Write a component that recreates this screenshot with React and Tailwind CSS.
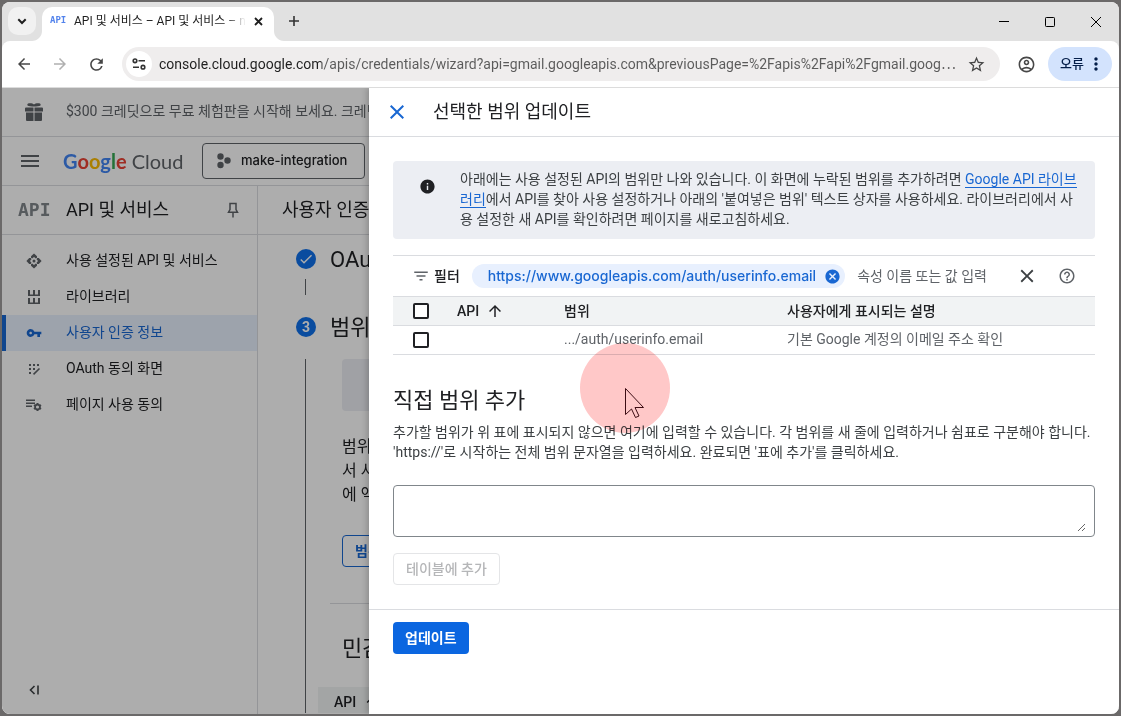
import {
  MdArrowBack,
  MdArrowForward,
  MdArrowUpward,
  MdCancel,
  MdCheck,
  MdClose,
  MdFilterList,
  MdHelpOutline,
  MdInfo,
  MdMenu,
  MdMoreVert,
  MdOutlineAccountCircle,
  MdRefresh,
  MdStarBorder,
  MdVpnKey,
} from 'react-icons/md';

const URL_TEXT =
  'console.cloud.google.com/apis/credentials/wizard?api=gmail.googleapis.com&previousPage=%2Fapis%2Fapi%2Fgmail.goog⋯';

function GiftIcon() {
  return (
    <svg width="18" height="18" viewBox="0 0 18 18" fill="currentColor" aria-hidden="true">
      <path d="M1 4.500h7.500v4H0v-3a1 1 0 0 1 1-1zM9.500 4.500H17a1 1 0 0 1 1 1v3H9.500zM1 9.500h7.500V18H2a1 1 0 0 1-1-1zM9.500 9.500H17V17a1 1 0 0 1-1 1H9.500z" />
      <path d="M9 3.500C6.500 3.500 3.500 3.500 2.500 2.600 2 1.600 2.600.5 4 .3 6 0 8 .6 9 1.400 10 .6 12 0 14 .3c1.400.2 2 1.300 1.500 2.300-1 .9-4 .9-6.500.9z" />
    </svg>
  );
}

function ApiIcon() {
  return (
    <svg width="16" height="16" viewBox="0 0 16 16" fill="currentColor" aria-hidden="true">
      <path d="M8 .4 11 3.200v1.600L9.800 5.500 8 4 6.200 5.500 5 4.800V3.200z" />
      <path d="M8 15.600 5 12.800v-1.600l1.200-.7L8 12l1.800-1.500 1.200.7v1.600z" />
      <path d="M.4 8 3.200 5h1.600l.7 1.200L4 8l1.500 1.800-.7 1.200H3.200z" />
      <path d="m15.600 8-2.800 3h-1.600l-.7-1.200L12 8l-1.500-1.800.7-1.200h1.600z" />
      <circle cx="8" cy="8" r="1.500" />
    </svg>
  );
}

function LibraryIcon() {
  return (
    <svg width="14" height="16" viewBox="0 0 14 16" fill="currentColor" aria-hidden="true">
      <path d="M1 1h2v5H1zM6 1h2v5H6zM11 1h2v5h-2zM1 9h2v5H1zM6 9h2v5H6zM11 9h2v5h-2zM1 5.500h12V7H1zM1 13.500h12V15H1z" />
    </svg>
  );
}

function ConsentIcon() {
  return (
    <svg width="14" height="14" viewBox="0 0 14 14" aria-hidden="true">
      <path
        fill="currentColor"
        d="M2 2h2v2H2zM6 2h2v2H6zM10 2h2v2h-2zM2 6h2v2H2zM6 6h2v2H6zM2 10h2v2H2z"
      />
      <path d="M6.500 12.300 12.500 6.500" stroke="currentColor" strokeWidth="1.600" fill="none" />
    </svg>
  );
}

function UsageIcon() {
  return (
    <svg width="16" height="14" viewBox="0 0 16 14" aria-hidden="true">
      <path fill="currentColor" d="M0 1.500h9V3H0zM0 4.500h9V6H0zM0 7.500h6V9H0z" />
      <circle cx="11.500" cy="9" r="2.400" fill="none" stroke="currentColor" strokeWidth="1.700" />
      <g stroke="currentColor" strokeWidth="2">
        <path d="M11.500 5v1.600M11.500 11.400V13M8 7l1.400.8M13.600 10.200l1.400.8M8 11l1.400-.8M13.600 7.800 15 7" />
      </g>
    </svg>
  );
}

function PinIcon() {
  return (
    <svg width="12" height="16" viewBox="0 0 12 16" fill="none" stroke="currentColor" strokeWidth="1.500" aria-hidden="true">
      <path d="M3 1.500h6v6l1.500 2.700h-9L3 7.500zM6 10.500V15.500" />
    </svg>
  );
}

function TuneIcon() {
  return (
    <svg width="14" height="12" viewBox="0 0 14 12" fill="none" stroke="#333" strokeWidth="1.600" aria-hidden="true">
      <circle cx="3" cy="2.800" r="1.800" />
      <path d="M6.500 2.800H13M1 9.200h6" />
      <circle cx="11" cy="9.200" r="1.800" />
    </svg>
  );
}

const NAV = [
  { label: '사용 설정된 API 및 서비스', icon: <ApiIcon /> },
  { label: '라이브러리', icon: <LibraryIcon /> },
  { label: '사용자 인증 정보', icon: <MdVpnKey size={16} />, active: true },
  { label: 'OAuth 동의 화면', icon: <ConsentIcon /> },
  { label: '페이지 사용 동의', icon: <UsageIcon /> },
];

function TabStrip() {
  return (
    <header className="flex h-[39px] items-end bg-[#e1e1e1]">
      <button
        aria-label="탭 검색"
        className="mb-1.5 ml-1.5 flex size-7 items-center justify-center rounded-[10px] bg-[#f1f1f1]"
      >
        <svg width="10" height="7" viewBox="0 0 10 7" fill="none" stroke="#1f1f1f" strokeWidth="2" aria-hidden="true">
          <path d="m1.300 1.300 3.700 3.700 3.700-3.700" />
        </svg>
      </button>
      <div className="relative ml-1.5 flex h-[34px] w-[232px] items-center rounded-t-[10px] bg-white pr-2 pb-1.5 pl-2">
        <svg className="absolute bottom-0 -left-2.5" width="10" height="10" viewBox="0 0 10 10" aria-hidden="true">
          <path d="M10 0v10H0C5.500 10 10 5.500 10 0z" fill="#fff" />
        </svg>
        <svg className="absolute -right-2.5 bottom-0" width="10" height="10" viewBox="0 0 10 10" aria-hidden="true">
          <path d="M0 0v10h10C4.500 10 0 5.500 0 0z" fill="#fff" />
        </svg>
        <span className="w-6 shrink-0 font-['DejaVu_Sans_Mono',monospace] text-[9px] font-bold text-[#5383ec]">API</span>
        <span className="min-w-0 flex-1 overflow-hidden text-xs whitespace-nowrap text-[#1f1f1f] [mask-image:linear-gradient(to_right,#000_152px,transparent_172px)]">
          API 및 서비스 – API 및 서비스 – n
        </span>
        <button aria-label="탭 닫기" className="ml-1 flex size-4 items-center justify-center text-[#1f1f1f]">
          <svg width="9" height="9" viewBox="0 0 9 9" stroke="currentColor" strokeWidth="1.800" aria-hidden="true">
            <path d="m1 1 7 7M8 1 1 8" />
          </svg>
        </button>
      </div>
      <button aria-label="새 탭" className="mb-1.5 ml-1.5 flex size-7 items-center justify-center">
        <svg width="10" height="10" viewBox="0 0 10 10" stroke="#333" strokeWidth="1.600" aria-hidden="true">
          <path d="M5 0v10M0 5h10" />
        </svg>
      </button>
      <div className="ml-auto flex h-full">
        <button aria-label="최소화" className="flex w-[46px] items-center justify-center">
          <svg width="10" height="10" viewBox="0 0 10 10" stroke="#000" aria-hidden="true"><path d="M0 4.500h10" /></svg>
        </button>
        <button aria-label="최대화" className="flex w-[46px] items-center justify-center">
          <svg width="10" height="10" viewBox="0 0 10 10" fill="none" stroke="#000" aria-hidden="true"><rect x=".5" y=".5" width="9" height="9" rx=".8" /></svg>
        </button>
        <button aria-label="닫기" className="flex w-[46px] items-center justify-center">
          <svg width="10" height="10" viewBox="0 0 10 10" stroke="#000" aria-hidden="true"><path d="m0 0 10 10M10 0 0 10" /></svg>
        </button>
      </div>
    </header>
  );
}

function Toolbar() {
  return (
    <div className="bg-[#e1e1e1]">
      <div className="flex h-[47px] items-center rounded-t-lg border-b border-[#dcdcdc] bg-white pr-[7px] pl-1 text-[#474747]">
        <button aria-label="뒤로" className="flex size-9 items-center justify-center"><MdArrowBack size={18} /></button>
        <button aria-label="앞으로" className="flex size-9 items-center justify-center text-[#b0b0b0]"><MdArrowForward size={18} /></button>
        <button aria-label="새로고침" className="flex size-9 items-center justify-center"><MdRefresh size={19} /></button>
        <div className="ml-2 flex h-[34px] flex-1 items-center rounded-full bg-[#efeded] pr-3 pl-1">
          <button aria-label="사이트 정보" className="flex size-[26px] items-center justify-center rounded-full bg-white">
            <TuneIcon />
          </button>
          <input
            aria-label="주소창"
            defaultValue={URL_TEXT}
            className="ml-[7px] min-w-0 flex-1 bg-transparent bg-[linear-gradient(to_right,#1f1f1f_162px,#5a5a5a_162px)] bg-clip-text font-[Roboto,'Noto_Sans_CJK_KR',sans-serif] text-sm text-transparent outline-none"
          />
          <button aria-label="북마크" className="flex size-6 items-center justify-center"><MdStarBorder size={19} /></button>
        </div>
        <button aria-label="프로필" className="ml-3.5 flex size-6 items-center justify-center"><MdOutlineAccountCircle size={19} /></button>
        <button className="ml-2.5 flex h-[34px] items-center rounded-full bg-[#d3e3fd] pr-1.5 pl-3 text-[13px] font-medium text-[#041e49]">
          오류
          <MdMoreVert size={20} className="ml-0.5" />
        </button>
      </div>
    </div>
  );
}

function Sidebar() {
  return (
    <aside className="flex w-64 shrink-0 flex-col border-r border-[#dadce0]">
      <div className="flex h-[49px] items-center border-b border-[#dadce0] pr-[18px] pl-4">
        <span className="w-12 font-['DejaVu_Sans_Mono',monospace] text-lg font-bold text-[#80868b]">API</span>
        <h2 className="flex-1 text-lg text-[#202124]">API 및 서비스</h2>
        <button aria-label="고정" className="text-[#5f6368]"><PinIcon /></button>
      </div>
      <nav className="flex-1 pt-2">
        <ul>
          {NAV.map((item) => (
            <li key={item.label}>
              <a
                href="#"
                className={
                  item.active
                    ? 'flex h-9 items-center border-l-4 border-[#1967d2] bg-[#e8f0fe] pl-4 text-sm text-[#1967d2]'
                    : 'flex h-9 items-center pl-5 text-sm text-[#202124]'
                }
              >
                <span className={item.active ? 'flex w-6 justify-center' : 'flex w-6 justify-center text-[#5f6368]'}>{item.icon}</span>
                <span className="ml-5 pb-0.5">{item.label}</span>
              </a>
            </li>
          ))}
        </ul>
      </nav>
      <button aria-label="메뉴 접기" className="mb-3 ml-5 flex size-6 items-center justify-center text-[#3c4043]">
        <svg width="10" height="10" viewBox="0 0 10 10" fill="none" stroke="currentColor" strokeWidth="1.600" aria-hidden="true">
          <path d="M5.500 1 1.500 5l4 4M9 .5v9" />
        </svg>
      </button>
    </aside>
  );
}

function Main() {
  return (
    <main className="min-w-0 flex-1 whitespace-nowrap text-[#202124]">
      <div className="flex h-[49px] items-center border-b border-[#dadce0] pl-6">
        <h1 className="text-lg">사용자 인증 정보</h1>
      </div>
      <div className="pt-2">
        <div className="flex h-8 items-center gap-3.5 pl-[38px]">
          <span className="flex size-5 items-center justify-center rounded-full bg-[#1071ea] text-white"><MdCheck size={16} /></span>
          <h3 className="text-[22px]">OAuth</h3>
        </div>
        <div className="mt-1 ml-[47px] h-4 border-l border-[#5f6368]" />
        <div className="mt-4 flex h-8 items-center gap-3.5 pl-[38px]">
          <span className="flex size-5 items-center justify-center rounded-full bg-[#1071ea] text-sm font-bold text-white">3</span>
          <h3 className="text-[22px]">범위</h3>
        </div>
        <div className="mt-4 ml-[47px] border-l border-[#5f6368] pl-3">
          <div className="ml-6 h-[52px] rounded bg-[#eceef3]" />
          <p className="mt-6 ml-6 text-base leading-6">
            범위
            <br />
            서 사
            <br />
            에 액
          </p>
          <button className="mt-7 ml-6 block h-8 rounded border border-[#1967d2] px-3 text-sm font-bold text-[#1967d2]">
            범위
          </button>
          <hr className="mt-9 ml-3 border-[#dadce0]" />
          <h3 className="mt-[31px] ml-6 text-[22px] leading-7">민감</h3>
          <div className="mt-6 flex h-[26px] items-center gap-2 bg-[#f1f3f4] pt-1 pl-4 text-sm font-medium">
            API <MdArrowUpward size={16} />
          </div>
        </div>
      </div>
    </main>
  );
}

function ConsolePage() {
  return (
    <div className="flex min-h-full flex-1 flex-col bg-white">
      <div className="flex h-[49px] items-center border-b border-[#dadce0] pl-[23px] text-sm whitespace-nowrap text-[#5f6368]">
        <GiftIcon />
        <span className="ml-[23px] pb-0.5">$300 크레딧으로 무료 체험판을 시작해 보세요. 크레딧</span>
      </div>
      <div className="flex h-[49px] items-center border-b border-[#dadce0] pl-4">
        <button aria-label="탐색 메뉴" className="text-[#5f6368]"><MdMenu size={24} /></button>
        <a href="#" className="ml-[21px] w-[139px] font-[Lato,sans-serif] text-xl whitespace-nowrap text-[#5f6368]">
          <span className="font-bold">
            <span className="text-[#4285f4]">G</span>
            <span className="text-[#ea4335]">o</span>
            <span className="text-[#fbbc04]">o</span>
            <span className="text-[#4285f4]">g</span>
            <span className="text-[#34a853]">l</span>
            <span className="text-[#ea4335]">e</span>
          </span>{' '}
          Cloud
        </a>
        <button className="flex h-9 w-[163px] items-center rounded border border-[#5f6368] pl-3.5 font-[Inter,sans-serif] text-[13px] font-medium text-[#202124]">
          <svg width="14" height="16" viewBox="0 0 14 16" fill="#5f6368" aria-hidden="true">
            <circle cx="3.500" cy="3.500" r="3.200" />
            <circle cx="10.500" cy="7.500" r="3.200" />
            <circle cx="3.500" cy="12" r="3.200" />
          </svg>
          <span className="ml-2.5">make-integration</span>
        </button>
      </div>
      <div className="flex flex-1">
        <Sidebar />
        <Main />
      </div>
    </div>
  );
}

function Checkbox({ label }) {
  return (
    <input
      type="checkbox"
      aria-label={label}
      className="block size-4 appearance-none rounded-xs border-2 border-[#202124] bg-white"
    />
  );
}

function ScopeDrawer() {
  return (
    <section
      role="dialog"
      aria-label="선택한 범위 업데이트"
      className="absolute inset-y-0 right-0 w-[750px] max-w-full bg-white text-sm text-[#3c4043] shadow-[-2px_0_6px_rgba(0,0,0,0.2)]"
    >
      <div className="flex h-[49px] items-center border-b border-[#dadce0] pl-4">
        <button aria-label="닫기" className="flex size-6 items-center justify-center text-[#1967d2]"><MdClose size={24} /></button>
        <h2 className="ml-6 text-lg text-[#202124]">선택한 범위 업데이트</h2>
      </div>

      <div className="px-6 pt-6 pb-6">
        <div className="flex rounded bg-[#eceef3] py-2 pr-4 pl-[26px]">
          <MdInfo size={17} className="mt-[9px] shrink-0 text-[#202124]" />
          <p className="ml-6 pb-0.5 leading-5 break-all">
            아래에는 사용 설정된 API의 범위만 나와 있습니다. 이 화면에 누락된 범위를 추가하려면{' '}
            <a href="#" className="border-b border-[#1967d2] text-[#1967d2]">Google API 라이브러리</a>
            에서 API를 찾아 사용 설정하거나 아래의 '붙여넣은 범위' 텍스트 상자를 사용하세요. 라이브러리에서 사용 설정한 새 API를 확인하려면 페이지를 새로고침하세요.
          </p>
        </div>

        <div className="mt-4 flex h-[41px] items-center border-t border-[#dadce0] pr-[19px] pl-[19px]">
          <MdFilterList size={18} className="text-[#5f6368]" />
          <label htmlFor="filter" className="ml-1 font-medium text-[#202124]">필터</label>
          <span className="ml-3 flex h-6 items-center rounded-full bg-[#e8f0fe] pr-1 pl-4 font-[Inter,sans-serif] text-sm font-medium text-[#1967d2]">
            https://www.googleapis.com/auth/userinfo.email
            <button aria-label="필터 삭제" className="ml-2"><MdCancel size={17} /></button>
          </span>
          <input
            id="filter"
            placeholder="속성 이름 또는 값 입력"
            className="ml-3 min-w-0 flex-1 outline-none placeholder:text-[#5f6368]"
          />
          <button aria-label="필터 지우기" className="text-[#3c4043]"><MdClose size={22} /></button>
          <button aria-label="도움말" className="ml-5 text-[#5f6368]"><MdHelpOutline size={18} /></button>
        </div>

        <table className="w-full table-fixed border-collapse text-left">
          <thead>
            <tr className="h-[29px] border-y border-[#dadce0] bg-[#f1f3f4] text-[#202124]">
              <th className="w-[52px] pl-5"><Checkbox label="모두 선택" /></th>
              <th className="w-[107px] pl-3 font-medium">
                <span className="flex items-center gap-[7px]">API <MdArrowUpward size={18} /></span>
              </th>
              <th className="w-[223px] pl-3 font-medium">범위</th>
              <th className="pl-3 font-medium">사용자에게 표시되는 설명</th>
            </tr>
          </thead>
          <tbody>
            <tr className="h-[29px] border-b border-[#dadce0] text-[#5f6368]">
              <td className="pl-5"><Checkbox label=".../auth/userinfo.email 선택" /></td>
              <td />
              <td className="pb-0.5 pl-3">.../auth/userinfo.email</td>
              <td className="pb-0.5 pl-3">기본 Google 계정의 이메일 주소 확인</td>
            </tr>
          </tbody>
        </table>

        <h3 className="mt-8 text-[22px] leading-7 text-[#202124]">직접 범위 추가</h3>
        <label htmlFor="scopes" className="mt-[7px] block leading-5">
          추가할 범위가 위 표에 표시되지 않으면 여기에 입력할 수 있습니다. 각 범위를 새 줄에 입력하거나 쉼표로 구분해야 합니다. 'https://'로 시작하는 전체 범위 문자열을 입력하세요. 완료되면 '표에 추가'를 클릭하세요.
        </label>
        <div className="mt-[23px] flex rounded border border-[#80868b] py-1 pr-2 pl-3">
          <textarea id="scopes" className="h-[42px] min-h-[42px] flex-1 resize-y outline-none" />
        </div>
        <button disabled className="mt-4 h-8 rounded border border-[#e4e5e7] px-3 font-medium text-[#b5b6b8]">
          테이블에 추가
        </button>
      </div>

      <div className="border-t border-[#dadce0] px-6 py-3">
        <button className="h-8 rounded bg-[#0b66e0] px-3 font-bold text-white">업데이트</button>
      </div>

      <div className="pointer-events-none absolute top-[255px] left-[211px] size-[90px] rounded-full bg-[#ffc8c8] mix-blend-multiply" />
      <svg
        className="pointer-events-none absolute top-[299px] left-[255px]"
        width="22"
        height="33"
        viewBox="0 0 22 33"
        aria-hidden="true"
      >
        <path
          d="M1.500 1.500v26l6-5.500 4 8.500 3.500-1.500-4-8.500h8.500z"
          fill="#ffc8c8"
          stroke="#3d0d14"
          strokeWidth="1"
        />
      </svg>
    </section>
  );
}

export default function App() {
  return (
    <div className="flex min-h-screen flex-col bg-[#6b6969] p-0.5 font-[Roboto,'Noto_Sans_CJK_KR',sans-serif]">
      <div className="flex flex-1 flex-col overflow-hidden rounded-lg bg-white">
        <TabStrip />
        <Toolbar />
        <div className="relative flex flex-1 flex-col overflow-hidden">
          <ConsolePage />
          <div className="absolute inset-0 bg-black/32" />
          <ScopeDrawer />
        </div>
      </div>
    </div>
  );
}
